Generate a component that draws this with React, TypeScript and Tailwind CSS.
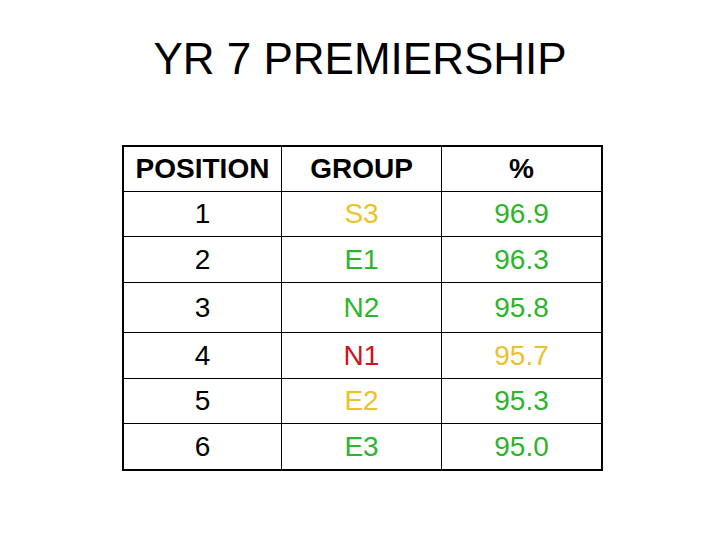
const rows = [
  { pos: "1", group: "S3", groupColor: "text-[#ebc12c]", pct: "96.9", pctColor: "text-[#2cb52c]", h: "h-[45px]" },
  { pos: "2", group: "E1", groupColor: "text-[#2cb52c]", pct: "96.3", pctColor: "text-[#2cb52c]", h: "h-[46px]" },
  { pos: "3", group: "N2", groupColor: "text-[#2cb52c]", pct: "95.8", pctColor: "text-[#2cb52c]", h: "h-[50px]" },
  { pos: "4", group: "N1", groupColor: "text-[#d4101a]", pct: "95.7", pctColor: "text-[#ebc12c]", h: "h-[46px]" },
  { pos: "5", group: "E2", groupColor: "text-[#ebc12c]", pct: "95.3", pctColor: "text-[#2cb52c]", h: "h-[45px]" },
  { pos: "6", group: "E3", groupColor: "text-[#2cb52c]", pct: "95.0", pctColor: "text-[#2cb52c]", h: "h-[45px]" },
];

const App = () => {
  return (
    <div
      className="w-[720px] h-[540px] bg-white text-black flex flex-col"
      style={{ fontFamily: '"Liberation Sans", Arial, sans-serif' }}
    >
      <h1 className="mt-[37px] text-center text-[44px] leading-[44px] font-normal">
        YR 7 PREMIERSHIP
      </h1>

      <div className="ml-[122px] mt-[64px] w-[481px] border-2 border-black">
        <div className="grid grid-cols-[158px_160px_159px] h-[45px] border-b border-black text-[28px] font-bold">
          <div className="flex items-center justify-center border-r border-black">POSITION</div>
          <div className="flex items-center justify-center border-r border-black">GROUP</div>
          <div className="flex items-center justify-center">%</div>
        </div>
        {rows.map((r, i) => (
          <div
            key={r.pos}
            className={`grid grid-cols-[158px_160px_159px] text-[28px] ${r.h} ${i < rows.length - 1 ? "border-b border-black" : ""}`}
          >
            <div className="flex items-center justify-center border-r border-black">{r.pos}</div>
            <div className={`flex items-center justify-center border-r border-black ${r.groupColor}`}>
              {r.group}
            </div>
            <div className={`flex items-center justify-center ${r.pctColor}`}>{r.pct}</div>
          </div>
        ))}
      </div>
    </div>
  );
};

export default App;
